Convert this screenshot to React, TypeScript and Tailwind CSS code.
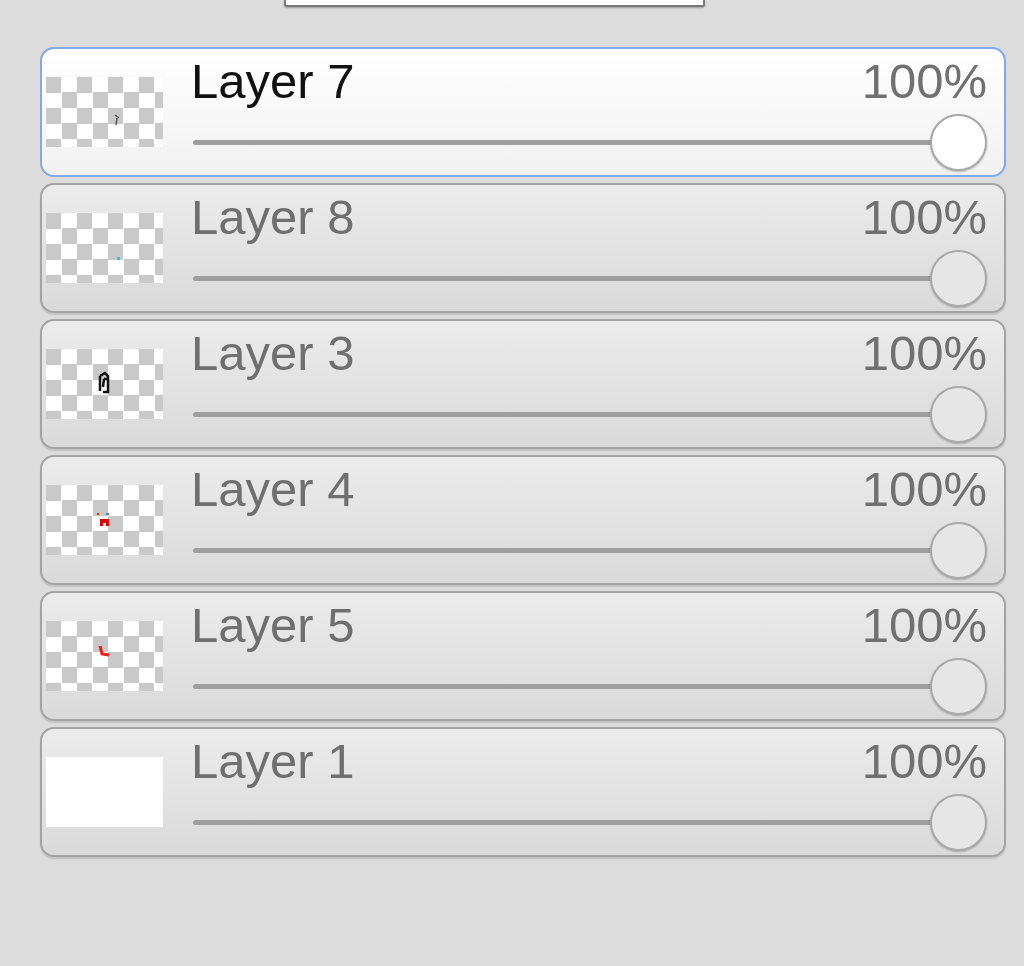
const layers = [
  { name: 'Layer 7', active: true, mark: 'tick' },
  { name: 'Layer 8', active: false, mark: 'dot' },
  { name: 'Layer 3', active: false, mark: 'glyph' },
  { name: 'Layer 4', active: false, mark: 'red' },
  { name: 'Layer 5', active: false, mark: 'hook' },
  { name: 'Layer 1', active: false, mark: 'white' },
]

function Mark({ kind }: { kind: string }) {
  if (kind === 'tick')
    return (
      <svg className="absolute left-[66px] top-[35px]" width="10" height="16" viewBox="0 0 10 16">
        <path d="M3 3 L7 6 M5 6 L4 13" stroke="#555" strokeWidth="1.5" fill="none" />
      </svg>
    )
  if (kind === 'dot')
    return <span className="absolute left-[71px] top-[44px] h-[3px] w-[3px] bg-[#36c9c0]" />
  if (kind === 'glyph')
    return (
      <svg className="absolute left-[50px] top-[22px]" width="16" height="24" viewBox="0 0 16 24">
        <path
          d="M4 5 L9 2 L12 5 L12 8 M4 5 L4 20 M8 8 L12 8 L12 21 L7 21 M8 8 L7 16"
          stroke="#111"
          strokeWidth="2.5"
          fill="none"
        />
      </svg>
    )
  if (kind === 'red')
    return (
      <svg className="absolute left-[50px] top-[26px]" width="16" height="18" viewBox="0 0 16 18">
        <rect x="1" y="2" width="2" height="2" fill="#d22" />
        <rect x="10" y="2" width="3" height="2" fill="#4a8aa8" />
        <path d="M4 8 h9 v7 h-3 v-3 h-3 v3 h-3 z" fill="#d00" />
      </svg>
    )
  if (kind === 'hook')
    return (
      <svg className="absolute left-[52px] top-[22px]" width="14" height="16" viewBox="0 0 14 16">
        <path d="M2 3 L4 11 L11 12" stroke="#ee1c1c" strokeWidth="3" fill="none" />
      </svg>
    )
  return null
}

function LayerCard({ name, active, mark }: { name: string; active: boolean; mark: string }) {
  return (
    <div
      className={`flex h-[130px] items-start rounded-[14px] border-2 pl-[4px] pr-[17px] ${
        active
          ? 'border-[#80a8ef] bg-gradient-to-b from-white to-[#f1f1f1]'
          : 'border-[#a3a3a3] bg-gradient-to-b from-[#ebebeb] to-[#dadada] shadow-[0_2px_1px_rgba(0,0,0,0.12)]'
      }`}
    >
      <div
        className={`relative mt-[28px] h-[70px] w-[117px] shrink-0 ${
          mark === 'white'
            ? 'bg-white'
            : 'bg-white bg-[image:conic-gradient(#fff_25%,#c9c9c9_0_50%,#fff_0_75%,#c9c9c9_0)] bg-[length:31px_31px]'
        }`}
      >
        <Mark kind={mark} />
      </div>
      <div className="ml-[28px] flex flex-1 flex-col pt-[8px]">
        <div className="flex items-baseline justify-between text-[49px] leading-none">
          <span className={active ? 'text-[#111]' : 'text-[#6f6f6f]'}>{name}</span>
          <span className="text-[#707070]">100%</span>
        </div>
        <div className="mt-[8px] flex items-center">
          <div className="ml-[2px] h-[5px] flex-1 rounded-full bg-[#9e9e9e]" />
          <div
            className={`-ml-[4px] h-[57px] w-[57px] shrink-0 rounded-full border-2 border-[#a9a9a9] shadow-[0_1px_2px_rgba(0,0,0,0.25)] ${
              active ? 'bg-white' : 'bg-[#e6e6e6]'
            }`}
          />
        </div>
      </div>
    </div>
  )
}

export default function App() {
  return (
    <div className="h-[966px] w-[1024px] overflow-hidden bg-[#dcdcdc] font-['Liberation_Sans',Arial,sans-serif]">
      <div className="ml-[284px] h-[7px] w-[421px] rounded-b-[3px] border-2 border-t-0 border-[#787878] bg-white shadow-[0_1px_2px_rgba(0,0,0,0.3)]" />
      <div className="ml-[40px] mt-[40px] flex w-[966px] flex-col gap-[6px]">
        {layers.map((layer) => (
          <LayerCard key={layer.name} {...layer} />
        ))}
      </div>
    </div>
  )
}
